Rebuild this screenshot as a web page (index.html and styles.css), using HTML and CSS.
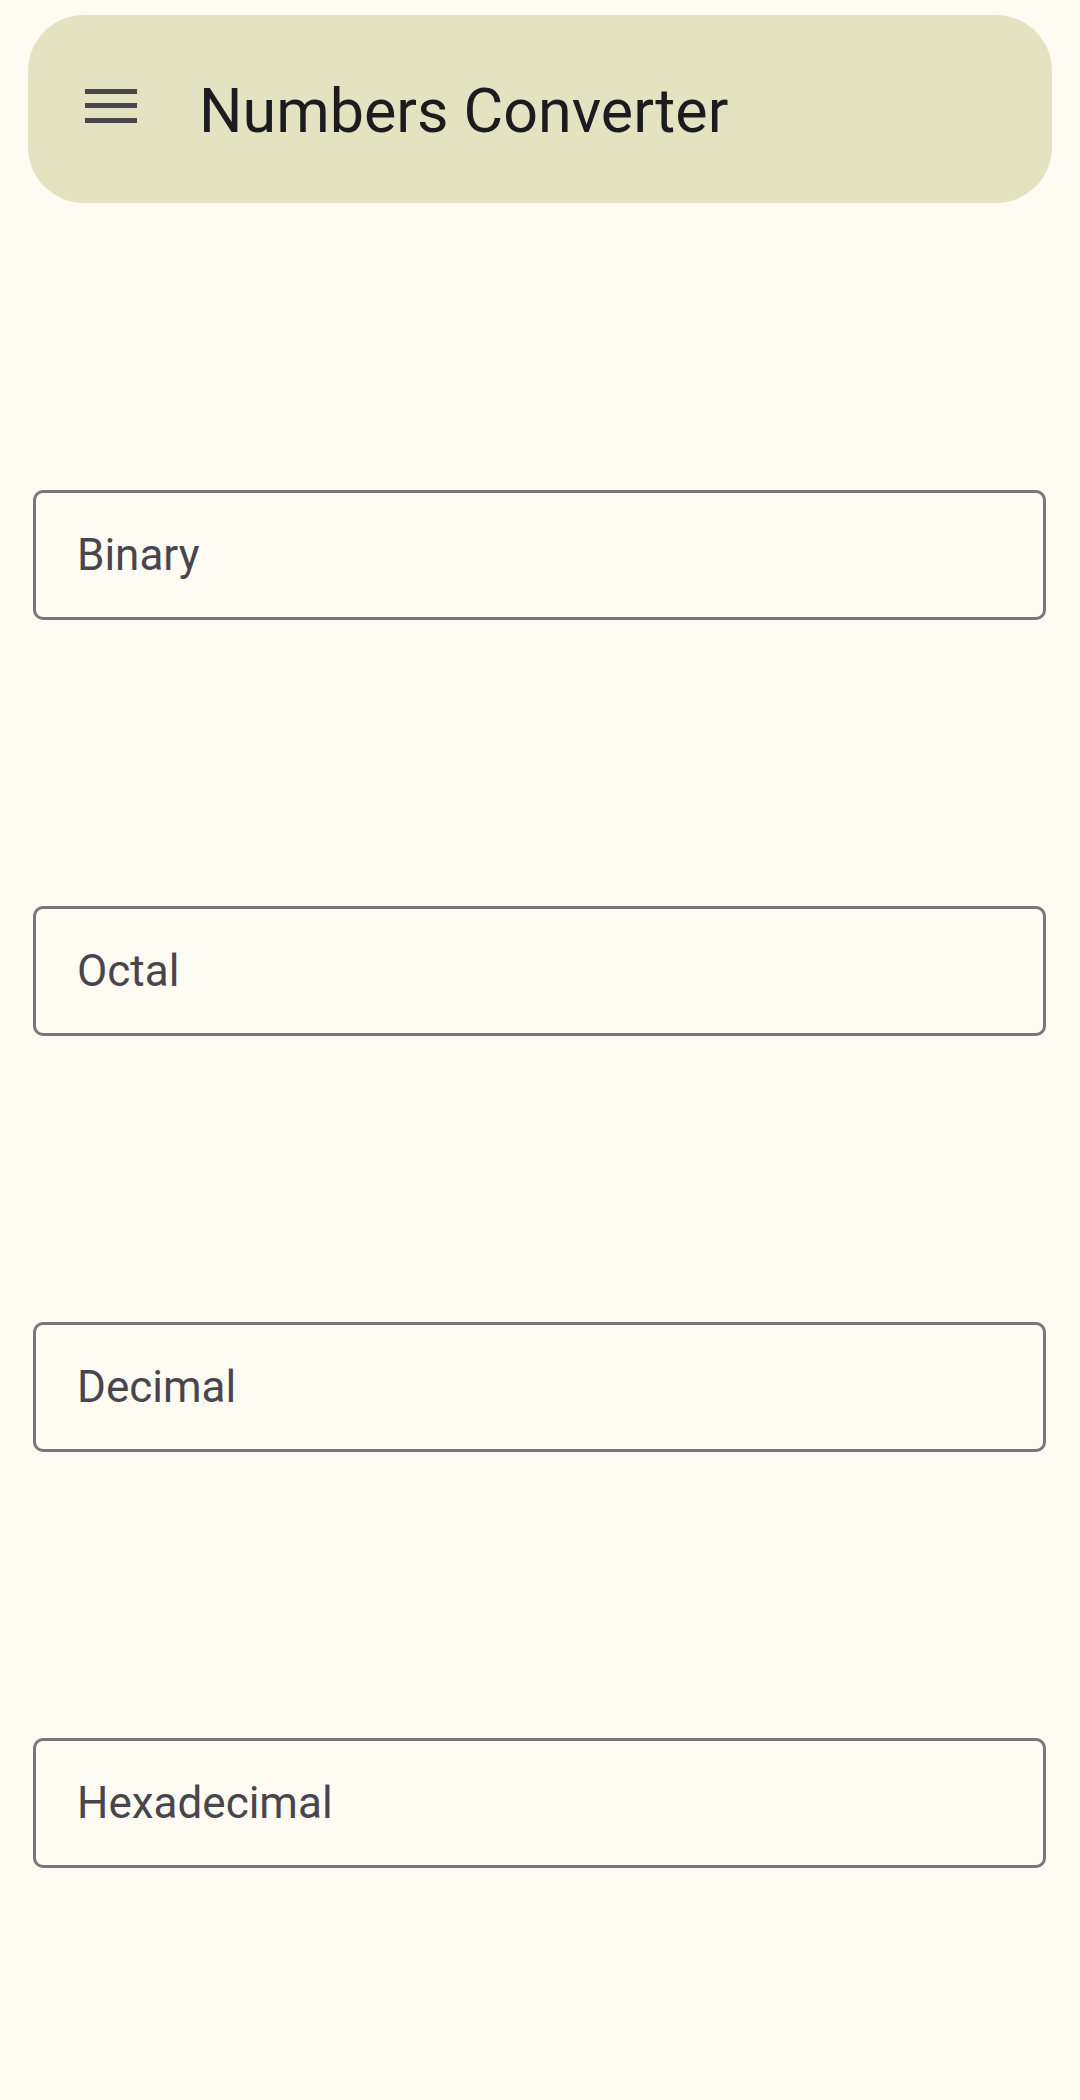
FILE: index.html
```html
<!DOCTYPE html>
<html>
<head>
<meta charset="utf-8">
<link rel="stylesheet" href="styles.css">
</head>
<body>
<header class="topbar">
  <div class="menu-btn" aria-label="Menu">
    <span class="menu-line"></span>
    <span class="menu-line"></span>
    <span class="menu-line"></span>
  </div>
  <h1 class="title">Numbers Converter</h1>
</header>
<main class="fields">
  <div class="field"><span class="field-label">Binary</span></div>
  <div class="field"><span class="field-label">Octal</span></div>
  <div class="field"><span class="field-label">Decimal</span></div>
  <div class="field"><span class="field-label">Hexadecimal</span></div>
</main>
</body>
</html>
```
FILE: styles.css
```css
html, body {
  margin: 0;
  padding: 0;
  background: #FEFBF2;
  font-family: Roboto, "Noto Sans", sans-serif;
}
body {
  width: 1080px;
  height: 2100px;
  overflow: hidden;
}
.topbar {
  margin: 15px 28px 0 28px;
  height: 188px;
  background: #E4E3C1;
  border-radius: 56px;
  display: flex;
  align-items: center;
  box-sizing: border-box;
  padding-left: 57px;
}
.menu-btn {
  width: 52px;
  display: flex;
  flex-direction: column;
  gap: 9.5px;
  margin-top: -7px;
}
.menu-line {
  display: block;
  height: 5px;
  background: #49454F;
}
.title {
  margin: 4px 0 0 62px;
  font-weight: 400;
  font-size: 61px;
  color: #1C1B1F;
  line-height: 1;
}
.fields {
  display: flex;
  flex-direction: column;
  gap: 286px;
  padding: 287px 34px 0 33px;
}
.field {
  height: 130px;
  border: 3px solid #79747E;
  border-radius: 10px;
  box-sizing: border-box;
  display: flex;
  align-items: center;
  padding-left: 41px;
}
.field-label {
  font-size: 44px;
  color: #49454F;
  line-height: 1;
}
```
